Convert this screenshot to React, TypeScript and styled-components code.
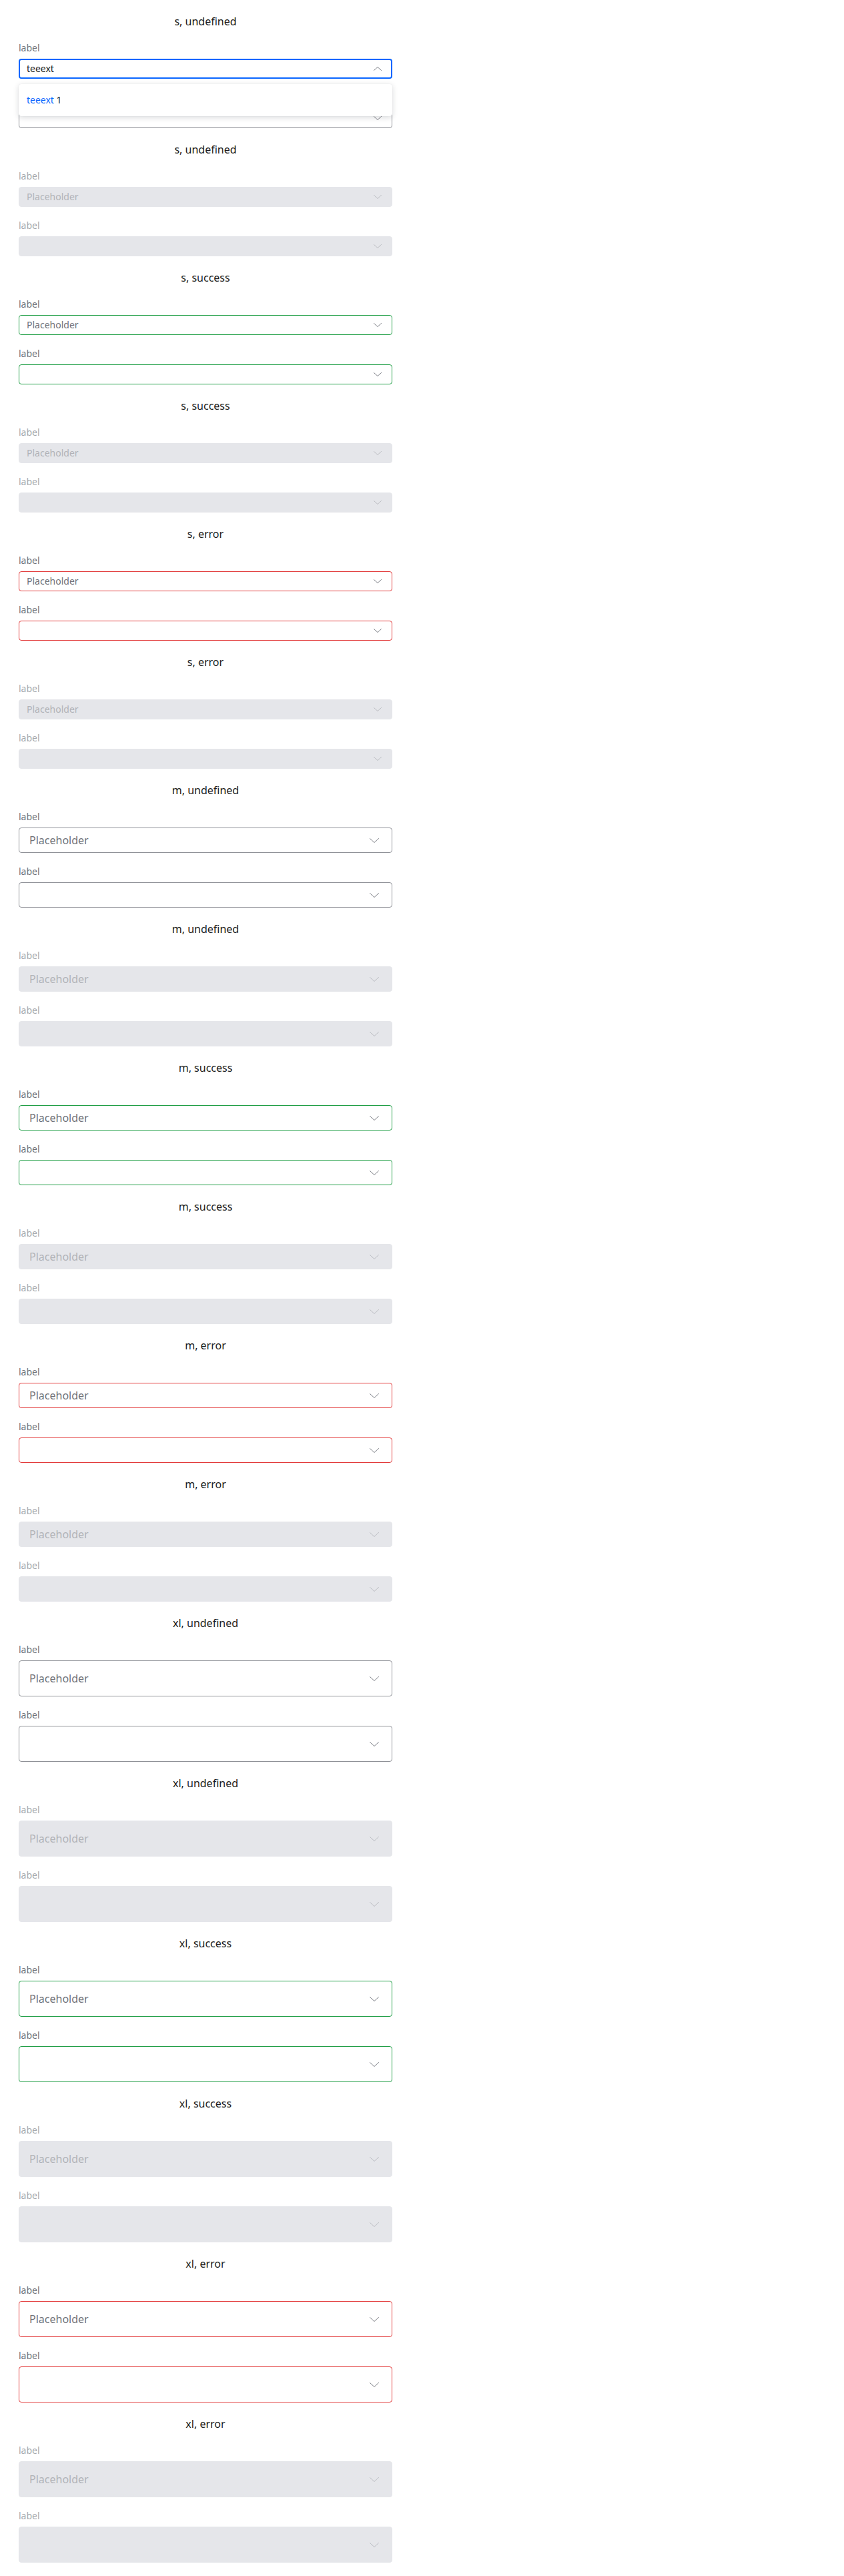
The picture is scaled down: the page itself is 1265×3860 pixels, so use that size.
import React from "react";
import styled, { createGlobalStyle, css } from "styled-components";

type Size = "s" | "m" | "xl";
type Status = "undefined" | "success" | "error";

const GlobalStyle = createGlobalStyle`
  html, body {
    margin: 0;
    padding: 0;
    background: #ffffff;
  }
  body {
    font-family: "Noto Sans", "Open Sans", Arial, sans-serif;
    color: #1b1c20;
  }
`;

const SIZES: Record<Size, { h: number; font: number; padX: number; chevW: number; chevH: number; chevRight: number }> = {
  s: { h: 30, font: 14, padX: 12, chevW: 12, chevH: 6, chevRight: 16 },
  m: { h: 38, font: 16, padX: 16, chevW: 14, chevH: 7, chevRight: 20 },
  xl: { h: 54, font: 16, padX: 16, chevW: 14, chevH: 7, chevRight: 20 },
};

const STATUS_BORDER: Record<Status, string> = {
  undefined: "#8f9197",
  success: "#1f9e45",
  error: "#e23a3a",
};

const Page = styled.div`
  width: 560px;
  padding: 20px 28px 20px 28px;
  display: flex;
  flex-direction: column;
  gap: 20px;
`;

const Section = styled.section`
  display: flex;
  flex-direction: column;
`;

const Title = styled.h3`
  margin: 0 0 18px 0;
  font-size: 16px;
  line-height: 24px;
  font-weight: 400;
  text-align: center;
  color: #1b1c20;
`;

const Fields = styled.div`
  display: flex;
  flex-direction: column;
  gap: 18px;
`;

const Field = styled.div`
  display: flex;
  flex-direction: column;
  gap: 6px;
`;

const Label = styled.label<{ $disabled: boolean }>`
  font-size: 14px;
  line-height: 20px;
  color: ${(p) => (p.$disabled ? "#a6a9ae" : "#6f727a")};
`;

const ControlWrap = styled.div`
  position: relative;
`;

const Control = styled.div<{ $size: Size; $status: Status; $disabled: boolean; $focused: boolean }>`
  box-sizing: border-box;
  height: ${(p) => SIZES[p.$size].h}px;
  display: flex;
  align-items: center;
  justify-content: space-between;
  border-radius: 4px;
  font-size: ${(p) => SIZES[p.$size].font}px;
  padding: 0 ${(p) => SIZES[p.$size].chevRight - 1}px 0 ${(p) => SIZES[p.$size].padX - 1}px;
  border: 1px solid ${(p) => STATUS_BORDER[p.$status]};
  background: #ffffff;
  ${(p) =>
    p.$disabled &&
    css`
      border-color: #e5e6ea;
      background: #e5e6ea;
    `}
  ${(p) =>
    p.$focused &&
    css`
      border: 2px solid #0a66ff;
      padding: 0 ${SIZES[p.$size].chevRight - 2}px 0 ${SIZES[p.$size].padX - 2}px;
    `}
`;

const Value = styled.span<{ $placeholder: boolean; $disabled: boolean }>`
  line-height: 20px;
  white-space: nowrap;
  color: ${(p) => (p.$disabled ? "#b1b3b8" : p.$placeholder ? "#6f727a" : "#1b1c20")};
`;

const ChevronBox = styled.span<{ $disabled: boolean }>`
  display: flex;
  align-items: center;
  color: ${(p) => (p.$disabled ? "#babcc1" : "#7b7e85")};
`;

const Menu = styled.div`
  position: absolute;
  top: calc(100% + 8px);
  left: 0;
  right: 0;
  z-index: 5;
  background: #ffffff;
  border-radius: 4px;
  box-shadow: 0 2px 8px rgba(20, 25, 40, 0.16), 0 0 1px rgba(20, 25, 40, 0.12);
  padding: 14px 12px;
`;

const MenuItem = styled.div`
  font-size: 14px;
  line-height: 20px;
  color: #1b1c20;
`;

const Match = styled.span`
  color: #0a66ff;
`;

function Chevron({ size, up, disabled }: { size: Size; up?: boolean; disabled: boolean }) {
  const { chevW: w, chevH: h } = SIZES[size];
  const points = up ? `0.5,${h - 0.5} ${w / 2},0.5 ${w - 0.5},${h - 0.5}` : `0.5,0.5 ${w / 2},${h - 0.5} ${w - 0.5},0.5`;
  return (
    <ChevronBox $disabled={disabled}>
      <svg width={w} height={h} viewBox={`0 0 ${w} ${h}`} fill="none">
        <polyline points={points} stroke="currentColor" strokeWidth="1" strokeLinecap="round" strokeLinejoin="round" />
      </svg>
    </ChevronBox>
  );
}

type SelectProps = {
  size: Size;
  status: Status;
  disabled: boolean;
  placeholder?: string;
  value?: string;
  open?: boolean;
};

function Select({ size, status, disabled, placeholder, value, open }: SelectProps) {
  const text = value ?? placeholder ?? "";
  return (
    <Field>
      <Label $disabled={disabled}>label</Label>
      <ControlWrap>
        <Control $size={size} $status={status} $disabled={disabled} $focused={!!open}>
          <Value $placeholder={!value} $disabled={disabled}>
            {text}
          </Value>
          <Chevron size={size} up={open} disabled={disabled} />
        </Control>
        {open && (
          <Menu>
            <MenuItem>
              <Match>teeext</Match> 1
            </MenuItem>
          </Menu>
        )}
      </ControlWrap>
    </Field>
  );
}

const sizes: Size[] = ["s", "m", "xl"];
const statuses: Status[] = ["undefined", "success", "error"];

export default function App() {
  const sections: { size: Size; status: Status; disabled: boolean }[] = [];
  sizes.forEach((size) =>
    statuses.forEach((status) => {
      sections.push({ size, status, disabled: false });
      sections.push({ size, status, disabled: true });
    })
  );

  return (
    <>
      <GlobalStyle />
      <Page>
        {sections.map((sec, i) => {
          const first = i === 0;
          return (
            <Section key={i}>
              <Title>
                {sec.size}, {sec.status}
              </Title>
              <Fields>
                {first ? (
                  <Select size={sec.size} status={sec.status} disabled={false} value="teeext" open />
                ) : (
                  <Select size={sec.size} status={sec.status} disabled={sec.disabled} placeholder="Placeholder" />
                )}
                <Select size={sec.size} status={sec.status} disabled={sec.disabled} />
              </Fields>
            </Section>
          );
        })}
      </Page>
    </>
  );
}
